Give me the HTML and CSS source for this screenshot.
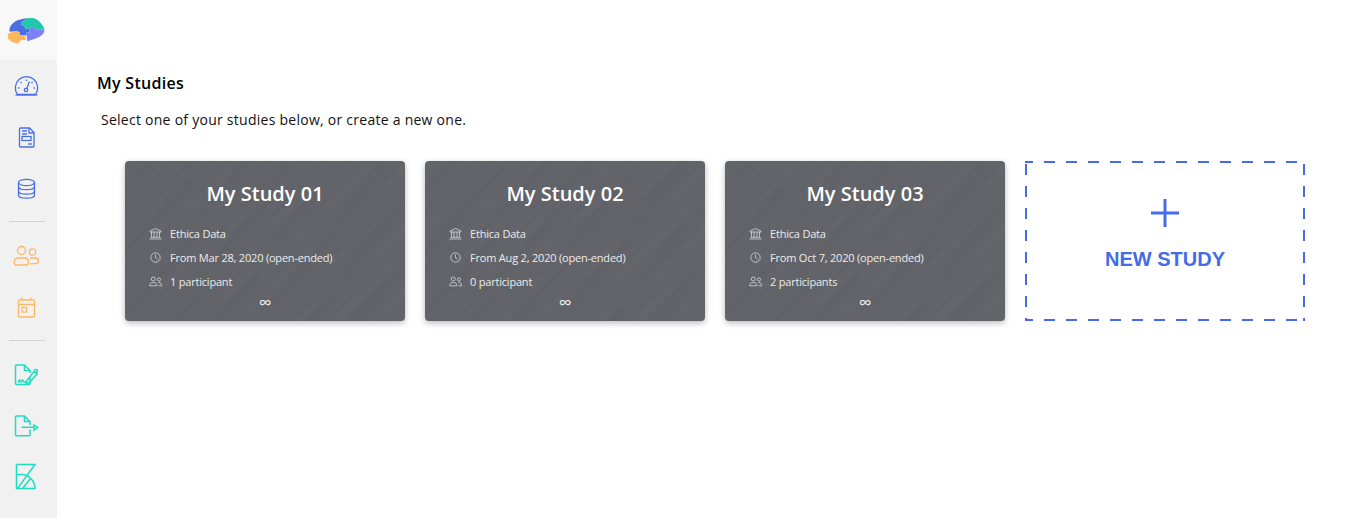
FILE: index.html
```html
<!DOCTYPE html>
<html lang="en">
<head>
<meta charset="utf-8">
<title>My Studies</title>
<link rel="stylesheet" href="styles.css">
</head>
<body>
<aside class="sidebar">
  <div class="logo">
    <svg width="57" height="60" viewBox="0 0 171 180">
      <path fill="#4a6fe3" d="M28 92 C28 78 40 65 55 60 L76 55 L74 62 C66 62 62 70 66 76 L76 80 L76 88 L86 86 L90 96 L80 98 L78 106 L60 106 L58 96 L50 94 L30 95 Z"/>
      <path fill="#1fc8aa" d="M76 55 L100 54 C115 58 128 72 133 88 L105 88 L104 82 L94 80 L86 86 L76 88 L76 80 L66 76 C62 70 66 62 74 62 Z"/>
      <path fill="#7b80f6" d="M133 88 C135 102 120 112 105 116 L82 124 L80 108 L78 106 L80 98 L90 96 L86 86 L94 80 L104 82 L105 88 Z"/>
      <path fill="#fdb65e" d="M24 104 C24 98 34 96 50 95 L58 96 L60 106 L75 106 L78 120 L62 121 L56 130 C46 131 34 126 28 120 C22 114 23 110 24 104 Z"/>
    </svg>
  </div>
  <nav class="nav">
    <a class="nav-item nav-blue">
      <svg width="30" height="31" viewBox="0 0 30 31"><path d="M4.500 24.500 A11.200 11.200 0 1 1 22.500 24.500 Z"/><path d="M2.500 25 H24.500"/><circle cx="13" cy="20" r="1.700"/><path d="M13.700 18.400 L16.500 11.500 M13.500 9.500 V11 M7.500 12 L8.500 13 M19.500 12 L18.500 13 M5 18 H6.500 M20.500 18 H22"/></svg>
    </a>
    <a class="nav-item nav-blue">
      <svg width="30" height="31" viewBox="0 0 30 31"><path d="M7.500 7 H16.500 L21 11.500 V25 A1 1 0 0 1 20 26 H7.500 A1 1 0 0 1 6.500 25 V8 A1 1 0 0 1 7.500 7 Z"/><path d="M16 7 V12 H21 M9 10 H14 M9 13 H14"/><rect x="9" y="15.500" width="9" height="4"/><path d="M15 23 H19"/></svg>
    </a>
    <a class="nav-item nav-blue">
      <svg width="30" height="31" viewBox="0 0 30 31"><ellipse cx="13.500" cy="10.500" rx="8" ry="3.200"/><path d="M5.500 10.500 V23 C5.500 25 9 26.200 13.500 26.200 C18 26.200 21.500 25 21.500 23 V10.500 M5.500 14.500 C5.500 16.500 9 17.700 13.500 17.700 C18 17.700 21.500 16.500 21.500 14.500 M5.500 19 C5.500 21 9 22.200 13.500 22.200 C18 22.200 21.500 21 21.500 19"/></svg>
    </a>
    <hr class="nav-rule">
    <a class="nav-item nav-orange">
      <svg width="30" height="31" viewBox="0 0 30 31"><circle cx="8.500" cy="10.500" r="4"/><path d="M3 25 C1.500 25 1.300 24 1.300 22.500 C1.300 19.500 3 18 5.500 18 H11.500 C14 18 15.500 19.500 15.500 22.500 C15.500 24 15 25 13.500 25 Z"/><circle cx="19.500" cy="12" r="3.200"/><path d="M17 18 H22.500 C24.500 18 25.500 19 25.500 21 C25.500 22.500 25 23.300 24 23.300 L17 23.800"/></svg>
    </a>
    <a class="nav-item nav-orange">
      <svg width="30" height="31" viewBox="0 0 30 31"><rect x="5.500" y="9" width="16" height="17" rx="1"/><path d="M5.500 13.500 H21.500 M9 6.500 V9 M18 6.500 V9"/><rect x="9" y="16.500" width="4.500" height="4.500"/></svg>
    </a>
    <hr class="nav-rule">
    <a class="nav-item nav-teal">
      <svg width="30" height="31" viewBox="0 0 30 31"><path d="M17 18 V24.500 A1 1 0 0 1 16 25.500 H3.500 A1 1 0 0 1 2.500 24.500 V7 A1 1 0 0 1 3.500 6 H11.500 L17 11.500 V14"/><path d="M11.500 6 V11.500 H17"/><path d="M5 23.500 L6.500 21 L8 23 L9.500 21 L11 23 H14"/><path d="M13.500 22 L21 12.500 L24 15 L16.500 23.500 L13 24.500 Z"/><circle cx="23" cy="12" r="1.500"/></svg>
    </a>
    <a class="nav-item nav-teal">
      <svg width="30" height="31" viewBox="0 0 30 31"><path d="M17 19.500 V24.700 A1 1 0 0 1 16 25.700 H3.500 A1 1 0 0 1 2.500 24.700 V7 A1 1 0 0 1 3.500 6 H11.500 L17 11.500 V15"/><path d="M11.500 6 V11.500 H17"/><path d="M8.500 17.300 H21"/><path d="M21 15 L24.700 17.500 L21 20 Z"/></svg>
    </a>
    <a class="nav-item nav-teal">
      <svg width="30" height="31" viewBox="0 0 30 31"><path d="M3.500 3.500 H22 L4.500 27.500 M3.500 3.500 V27.500 H22 C22 20 16 13.500 9 13.500 H3.500 M9.500 27.500 L18 17"/></svg>
    </a>
  </nav>
</aside>
<main class="content">
  <h1 class="page-title">My Studies</h1>
  <p class="page-lead">Select one of your studies below, or create a new one.</p>
  <section class="cards">
    <article class="card">
      <h2 class="card-title">My Study 01</h2>
      <ul class="card-info">
        <li><svg class="info-icon" viewBox="0 0 13 13"><path d="M1 4.200 L6.500 1.500 L12 4.200 V5 H1 Z M2.500 5 V10 M5 5 V10 M8 5 V10 M10.500 5 V10 M1.500 10.300 H11.500 M.5 12 H12.500"/></svg>Ethica Data</li>
        <li><svg class="info-icon" viewBox="0 0 13 13"><circle cx="6.500" cy="6.500" r="4.700"/><path d="M6.500 3.500 V6.700 L8.700 8"/></svg>From Mar 28, 2020 (open-ended)</li>
        <li><svg class="info-icon" viewBox="0 0 13 13"><circle cx="4.300" cy="4" r="2"/><path d="M.7 10.800 C.7 8.200 2 7.500 4.300 7.500 C6.600 7.500 7.900 8.200 7.900 10.800 Z"/><circle cx="10" cy="4.500" r="1.600"/><path d="M9.300 7.500 C11.500 7.300 12.500 8.300 12.500 10.800 H9.500"/></svg>1 participant</li>
      </ul>
      <div class="card-term">∞</div>
    </article>
    <article class="card">
      <h2 class="card-title">My Study 02</h2>
      <ul class="card-info">
        <li><svg class="info-icon" viewBox="0 0 13 13"><path d="M1 4.200 L6.500 1.500 L12 4.200 V5 H1 Z M2.500 5 V10 M5 5 V10 M8 5 V10 M10.500 5 V10 M1.500 10.300 H11.500 M.5 12 H12.500"/></svg>Ethica Data</li>
        <li><svg class="info-icon" viewBox="0 0 13 13"><circle cx="6.500" cy="6.500" r="4.700"/><path d="M6.500 3.500 V6.700 L8.700 8"/></svg>From Aug 2, 2020 (open-ended)</li>
        <li><svg class="info-icon" viewBox="0 0 13 13"><circle cx="4.300" cy="4" r="2"/><path d="M.7 10.800 C.7 8.200 2 7.500 4.300 7.500 C6.600 7.500 7.900 8.200 7.900 10.800 Z"/><circle cx="10" cy="4.500" r="1.600"/><path d="M9.300 7.500 C11.500 7.300 12.500 8.300 12.500 10.800 H9.500"/></svg>0 participant</li>
      </ul>
      <div class="card-term">∞</div>
    </article>
    <article class="card">
      <h2 class="card-title">My Study 03</h2>
      <ul class="card-info">
        <li><svg class="info-icon" viewBox="0 0 13 13"><path d="M1 4.200 L6.500 1.500 L12 4.200 V5 H1 Z M2.500 5 V10 M5 5 V10 M8 5 V10 M10.500 5 V10 M1.500 10.300 H11.500 M.5 12 H12.500"/></svg>Ethica Data</li>
        <li><svg class="info-icon" viewBox="0 0 13 13"><circle cx="6.500" cy="6.500" r="4.700"/><path d="M6.500 3.500 V6.700 L8.700 8"/></svg>From Oct 7, 2020 (open-ended)</li>
        <li><svg class="info-icon" viewBox="0 0 13 13"><circle cx="4.300" cy="4" r="2"/><path d="M.7 10.800 C.7 8.200 2 7.500 4.300 7.500 C6.600 7.500 7.900 8.200 7.900 10.800 Z"/><circle cx="10" cy="4.500" r="1.600"/><path d="M9.300 7.500 C11.500 7.300 12.500 8.300 12.500 10.800 H9.500"/></svg>2 participants</li>
      </ul>
      <div class="card-term">∞</div>
    </article>
    <a class="new-study">
      <svg class="new-plus" width="28" height="28" viewBox="0 0 28 28"><path d="M14 0 V28 M0 14 H28"/></svg>
      <span class="new-label">NEW STUDY</span>
    </a>
  </section>
</main>
</body>
</html>
```
FILE: styles.css
```css
* { box-sizing: border-box; }
html, body { height: 100%; }
body {
  margin: 0;
  display: flex;
  min-height: 518px;
  overflow: hidden;
  background: #fff;
  color: #111;
  font-family: "Open Sans", "Noto Sans", sans-serif;
}
.sidebar {
  flex: 0 0 57px;
  background: #f1f1f1;
}
.logo {
  height: 60px;
  background: #f8f8f8;
}
.logo svg { display: block; }
.nav { display: flex; flex-direction: column; }
.nav-item {
  height: 51px;
  padding: 10px 0 0 13px;
}
.nav-item svg { display: block; fill: none; stroke-width: 1.300; }
.nav-blue svg { stroke: #4a6fe3; }
.nav-orange svg { stroke: #fdb866; }
.nav-teal svg { stroke: #22dcc2; stroke-width: 1.500; }
.nav-rule {
  width: 36px;
  height: 1px;
  margin: 8px 0 8px 9px;
  border: 0;
  background: #d2d2d2;
}
.content {
  flex: 1;
  padding: 72px 54px 0 40px;
}
.page-title {
  margin: 0;
  font-size: 16px;
  font-weight: 600;
  line-height: 22px;
  letter-spacing: .3px;
  color: #000;
}
.page-lead {
  margin: 16px 0 0 4px;
  font-size: 14px;
  line-height: 20px;
  letter-spacing: .26px;
  color: #111;
}
.cards {
  display: flex;
  gap: 20px;
  margin: 31px 0 0 28px;
}
.card {
  width: 280px;
  height: 160px;
  padding-top: 19px;
  border-radius: 4px;
  color: #ececec;
  background-color: #636469;
  background-image:
    repeating-linear-gradient(-47deg, rgba(0,0,0,.022) 0, transparent 3px, transparent 11px, rgba(0,0,0,.022) 14px),
    repeating-linear-gradient(-41deg, rgba(255,255,255,.012) 0, transparent 6px, transparent 17px, rgba(255,255,255,.012) 23px),
    repeating-linear-gradient(-53deg, rgba(0,0,0,.016) 0, transparent 9px, transparent 28px, rgba(0,0,0,.016) 37px);
  box-shadow: 0 2px 6px rgba(0,0,0,.28);
}
.card-title {
  margin: 0;
  font-size: 20px;
  font-weight: 600;
  line-height: 28px;
  text-align: center;
  color: #fff;
}
.card-info {
  list-style: none;
  margin: 13px 0 0;
  padding: 0 0 0 24px;
  font-size: 11px;
  letter-spacing: -.2px;
}
.card-info li {
  display: flex;
  align-items: center;
  gap: 8px;
  height: 24px;
}
.info-icon {
  flex: none;
  width: 13px;
  height: 13px;
  fill: none;
  stroke: #d8d8d8;
  stroke-width: .8;
}
.card-term {
  padding-top: 1px;
  font-size: 18px;
  line-height: 16px;
  text-align: center;
  color: #ececec;
}
.new-study {
  width: 280px;
  height: 160px;
  display: flex;
  flex-direction: column;
  align-items: center;
  padding-top: 38px;
  color: #456ce6;
  background:
    linear-gradient(90deg, #456ce6 50%, transparent 50%) -3px 0 / 22px 2px repeat-x,
    linear-gradient(90deg, #456ce6 50%, transparent 50%) -3px 100% / 22px 2px repeat-x,
    linear-gradient(180deg, #456ce6 50%, transparent 50%) 0 3px / 2px 22px repeat-y,
    linear-gradient(180deg, #456ce6 50%, transparent 50%) 100% 3px / 2px 22px repeat-y;
}
.new-plus { display: block; fill: none; stroke: #456ce6; stroke-width: 3; }
.new-label {
  margin-top: 20px;
  font-family: "Liberation Sans", Arial, sans-serif;
  font-size: 20px;
  font-weight: 700;
  line-height: 24px;
}
```
